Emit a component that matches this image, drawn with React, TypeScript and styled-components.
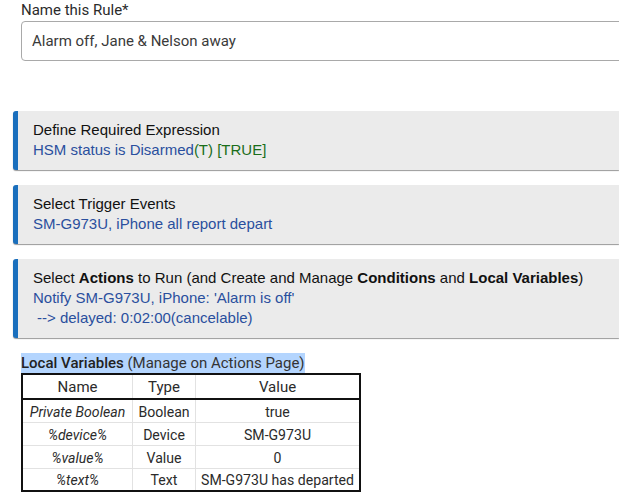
import React from "react";
import styled, { createGlobalStyle } from "styled-components";

const GlobalStyle = createGlobalStyle`
  html, body {
    margin: 0;
    padding: 0;
    background: #fff;
    overflow: hidden;
  }
`;

interface Variable {
  name: string;
  type: string;
  value: string;
}

const variables: Variable[] = [
  { name: "Private Boolean", type: "Boolean", value: "true" },
  { name: "%device%", type: "Device", value: "SM-G973U" },
  { name: "%value%", type: "Value", value: "0" },
  { name: "%text%", type: "Text", value: "SM-G973U has departed" },
];

const App: React.FC = () => {
  return (
    <Page>
      <GlobalStyle />
      <NameField>
        <NameLabel>Name this Rule*</NameLabel>
        <NameInput readOnly value="Alarm off, Jane & Nelson away" />
      </NameField>

      <Cards>
        <Card>
          <CardTitle>Define Required Expression</CardTitle>
          <CardLine>
            HSM status is Disarmed<Green>(T) [TRUE]</Green>
          </CardLine>
        </Card>
        <Card>
          <CardTitle>Select Trigger Events</CardTitle>
          <CardLine>SM-G973U, iPhone all report depart</CardLine>
        </Card>
        <Card>
          <CardTitle>
            Select <b>Actions</b> to Run (and Create and Manage{" "}
            <b>Conditions</b> and <b>Local Variables</b>)
          </CardTitle>
          <CardLine>Notify SM-G973U, iPhone: 'Alarm is off'</CardLine>
          <DelayLine>--&gt; delayed: 0:02:00(cancelable)</DelayLine>
        </Card>
      </Cards>

      <Variables>
        <Heading>
          <Selected>
            <Strong>Local Variables</Strong> (Manage on Actions Page)
          </Selected>
        </Heading>
        <Table>
          <thead>
            <tr>
              <HeadCell>Name</HeadCell>
              <HeadCell>Type</HeadCell>
              <HeadCell>Value</HeadCell>
            </tr>
          </thead>
          <tbody>
            {variables.map((v) => (
              <tr key={v.name}>
                <NameCell>{v.name}</NameCell>
                <Cell>{v.type}</Cell>
                <Cell>{v.value}</Cell>
              </tr>
            ))}
          </tbody>
        </Table>
      </Variables>
    </Page>
  );
};

const Page = styled.div`
  width: 619px;
  height: 500px;
  overflow: hidden;
  box-sizing: border-box;
  padding-top: 1px;
  font-family: Roboto, "Liberation Sans", sans-serif;
  color: #222;
`;

const NameField = styled.div`
  margin-left: 21px;
`;

const NameLabel = styled.div`
  font-size: 15px;
  line-height: 19px;
  color: #2b2b2b;
`;

const NameInput = styled.input`
  display: block;
  box-sizing: border-box;
  width: 620px;
  height: 40px;
  margin: 1px 0 0;
  padding: 0 10px;
  border: 1px solid #a9a9a9;
  border-radius: 4px;
  outline: none;
  font-family: Roboto, sans-serif;
  font-size: 15px;
  color: #3a3a3a;
`;

const Cards = styled.div`
  display: flex;
  flex-direction: column;
  gap: 15px;
  margin: 50px 0 0 13px;
`;

const Card = styled.div`
  box-sizing: border-box;
  width: 606px;
  padding: 9px 0 10px 15px;
  background: #ebebeb;
  border-left: 5px solid #1a6fbd;
  border-radius: 3px 0 0 3px;
  box-shadow: 0 1px 1px #9a9a9a;
  font-family: "Liberation Sans", Arial, sans-serif;
  font-size: 15px;
  line-height: 20px;
`;

const CardTitle = styled.div`
  color: #111;
  white-space: nowrap;
`;

const CardLine = styled.div`
  color: #2a4f9e;
  white-space: nowrap;
`;

const DelayLine = styled(CardLine)`
  padding-left: 4px;
`;

const Green = styled.span`
  color: #1a6e1a;
`;

const Variables = styled.div`
  margin: 16px 0 0 21px;
`;

const Heading = styled.div`
  font-size: 15px;
  line-height: 18px;
  color: #333;
`;

const Selected = styled.span`
  padding: 1px 0;
  background: #b4d5fe;
`;

const Strong = styled.span`
  font-weight: 500;
  color: #222;
`;

const Table = styled.table`
  box-sizing: border-box;
  width: 340px;
  margin-top: 1px;
  border-collapse: collapse;
  border: 2px solid #111;
  table-layout: fixed;
  font-size: 14.1px;
  color: #2b2b2b;
`;

const HeadCell = styled.th`
  height: 23px;
  padding: 0;
  border-bottom: 2px solid #111;
  border-right: 1px solid #e2e2e2;
  font-weight: 400;
  font-size: 15px;
  text-align: center;
  &:nth-child(1) { width: 109px; }
  &:nth-child(2) { width: 62px; }
`;

const Cell = styled.td`
  box-sizing: border-box;
  height: 23px;
  padding: 2px 0 0;
  border-bottom: 1px solid #e2e2e2;
  border-right: 1px solid #e2e2e2;
  text-align: center;
  white-space: nowrap;
`;

const NameCell = styled(Cell)`
  font-style: italic;
`;

export default App;
